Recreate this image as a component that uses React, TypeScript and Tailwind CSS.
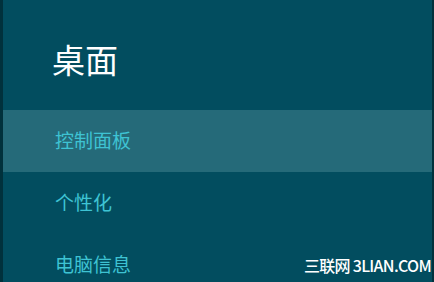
import React from 'react';

const items = ['控制面板', '个性化', '电脑信息'];

export default function App() {
  return (
    <div
      className="relative w-[434px] h-[282px] overflow-hidden bg-[#024d5f] border-l-[3px] border-r-[2px] border-[#01313c]"
      style={{ fontFamily: '"Noto Sans CJK SC", "Noto Sans", sans-serif' }}
    >
      <div className="h-[110px] pl-[49px] pt-[41px]">
        <h1 className="text-[33px] leading-[36px] text-white">桌面</h1>
      </div>
      {items.map((item, i) => (
        <div
          key={item}
          className={`h-[62px] flex items-center pl-[52px] pb-[3px] ${i === 0 ? 'bg-[#256a79]' : ''}`}
        >
          <span className="text-[19px] leading-none text-[#3ec3d3]">{item}</span>
        </div>
      ))}
      <div className="absolute right-[1px] bottom-[9px] text-[16px] leading-none font-medium text-white tracking-[-0.7px]">
        三联网 3LIAN.COM
      </div>
    </div>
  );
}
